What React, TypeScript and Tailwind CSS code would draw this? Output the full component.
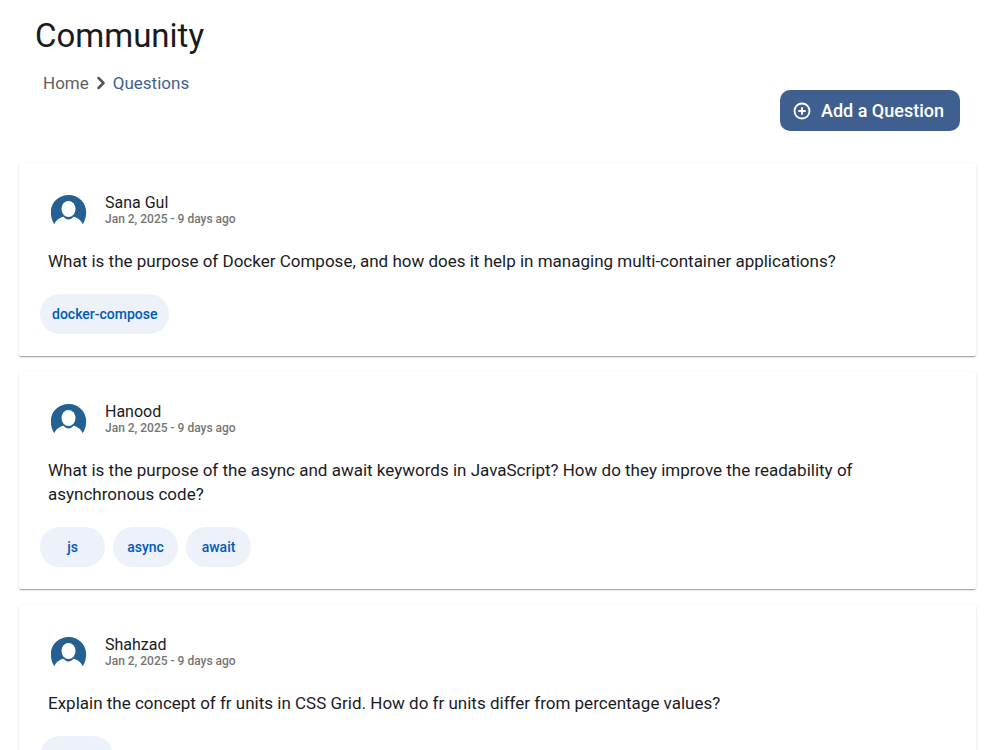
import { ChevronRight, CirclePlus } from 'lucide-react';

type Question = {
  id: number;
  author: string;
  posted: string;
  text: string;
  tags: string[];
};

const questions: Question[] = [
  {
    id: 1,
    author: 'Sana Gul',
    posted: 'Jan 2, 2025 - 9 days ago',
    text: 'What is the purpose of Docker Compose, and how does it help in managing multi-container applications?',
    tags: ['docker-compose'],
  },
  {
    id: 2,
    author: 'Hanood',
    posted: 'Jan 2, 2025 - 9 days ago',
    text: 'What is the purpose of the async and await keywords in JavaScript? How do they improve the readability of asynchronous code?',
    tags: ['js', 'async', 'await'],
  },
  {
    id: 3,
    author: 'Shahzad',
    posted: 'Jan 2, 2025 - 9 days ago',
    text: 'Explain the concept of fr units in CSS Grid. How do fr units differ from percentage values?',
    tags: [],
  },
];

const Avatar = () => (
  <svg className="w-9 h-8 shrink-0" viewBox="0 0 36 32" aria-hidden="true">
    <path
      d="M17.500 0C7.500 0-.2 7.800-.2 17c0 5 1.300 9 3.500 12.200C5 25.500 8.500 22.500 12.500 21.800c1.300 1.600 3 2.600 5 2.600s3.700-1 5-2.600c4 .7 7.500 3.700 9.200 7.400 2.200-3.200 3.500-7.200 3.500-12.200C35.200 7.800 27.500 0 17.500 0Z"
      fill="#246092"
    />
    <ellipse cx="17.500" cy="14" rx="7" ry="8" fill="#fff" />
  </svg>
);

const QuestionCard = ({ question }: { question: Question }) => {
  return (
    <li className="rounded-xs bg-white px-[21px] pt-8 pb-[22px] shadow-[0_2px_1px_-1px_rgba(0,0,0,0.2),0_1px_1px_0_rgba(0,0,0,0.14),0_1px_3px_0_rgba(0,0,0,0.12)]">
      <div className="flex items-start gap-[18px] px-[11px]">
        <Avatar />
        <div className="-mt-0.5">
          <p className="text-base leading-5 text-[#1a1b1f]">
            {question.author}
          </p>
          <p className="text-xs leading-3 font-medium text-[#757575]">
            {question.posted}
          </p>
        </div>
      </div>
      <p className="mt-[22px] px-2 text-[17px] leading-6 text-[#1a1b1f]">
        {question.text}
      </p>
      <div className="mt-[21px] flex min-h-10 flex-wrap gap-2">
        {question.tags.map((tag) => (
          <button
            key={tag}
            className="h-10 min-w-[65px] rounded-full bg-[#ecf1fa] px-3 text-sm font-medium text-[#005cbb]"
          >
            {tag}
          </button>
        ))}
        {question.tags.length === 0 && (
          <span className="h-10 w-[73px] rounded-full bg-[#ecf1fa]" />
        )}
      </div>
    </li>
  );
};

export default function App() {
  return (
    <main className="min-h-screen bg-white pr-6 pl-[19px] pb-6 font-[Roboto,sans-serif]">
      <h1 className="px-4 pt-4 text-[33px] leading-10 text-[#1a1b1f]">
        Community
      </h1>
      <nav
        aria-label="Breadcrumb"
        className="mt-[15px] flex items-center gap-0.5 px-6 text-[17px] leading-6"
      >
        <a href="#home" className="text-[#5f5f5f]">
          Home
        </a>
        <ChevronRight className="size-5 text-[#555]" strokeWidth={3} />
        <a href="#questions" className="text-[#3f5f90]">
          Questions
        </a>
      </nav>
      <div className="-mt-[5px] flex justify-end px-4">
        <button className="flex h-[41px] items-center gap-[10px] rounded-[10px] bg-[#3f5f90] pr-4 pl-[13px] text-lg font-medium text-white">
          <CirclePlus className="size-[18px]" strokeWidth={2.5} />
          Add a Question
        </button>
      </div>
      <ul className="mt-8 flex flex-col gap-4">
        {questions.map((question) => (
          <QuestionCard key={question.id} question={question} />
        ))}
      </ul>
    </main>
  );
}
